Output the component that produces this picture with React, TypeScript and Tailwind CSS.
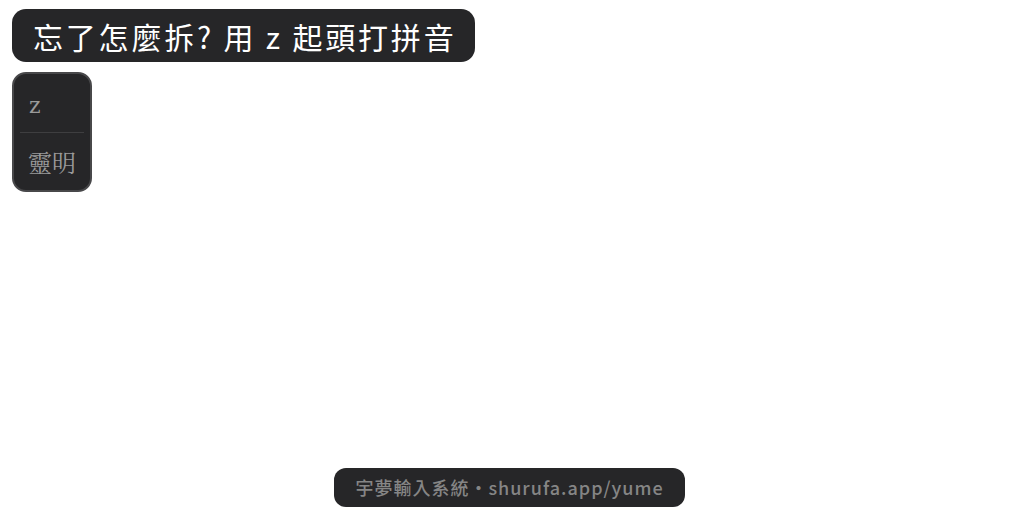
import React from 'react';

export default function App() {
  return (
    <div className="w-[1020px] h-[510px] bg-white relative flex flex-col items-start p-3 pt-[9px]">
      <div className="h-[53px] pl-[21px] pr-[19px] flex items-center rounded-[14px] bg-[#262628] text-white text-[30px] leading-none font-['Noto_Sans_CJK_TC',sans-serif] tracking-[2.8px]">
        忘了怎麼拆? 用 z 起頭打拼音
      </div>

      <div className="mt-[10px] w-[80px] h-[120px] rounded-[14px] bg-[#262628] border-2 border-[#48484a] flex flex-col px-[6px]">
        <div className="h-[58px] flex items-center pl-[9px] pt-[4px] text-[#9a9a9a] text-[22px] font-['DejaVu_Serif',serif]">
          z
        </div>
        <div className="h-px bg-[#3e3e40]" />
        <div className="flex-1 flex items-center pl-[8px] text-[#9a9a9a] text-[24px] leading-none font-['Noto_Serif_CJK_TC','Noto_Sans_CJK_TC',serif]">
          靈明
        </div>
      </div>

      <div className="absolute left-[334px] top-[468px] w-[351px] h-[39px] rounded-[12px] bg-[#262628] flex items-center justify-center text-[#858585] text-[18px] font-medium tracking-[1px] font-['Noto_Sans_CJK_TC',sans-serif]">
        宇夢輸入系統・shurufa.app/yume
      </div>
    </div>
  );
}
